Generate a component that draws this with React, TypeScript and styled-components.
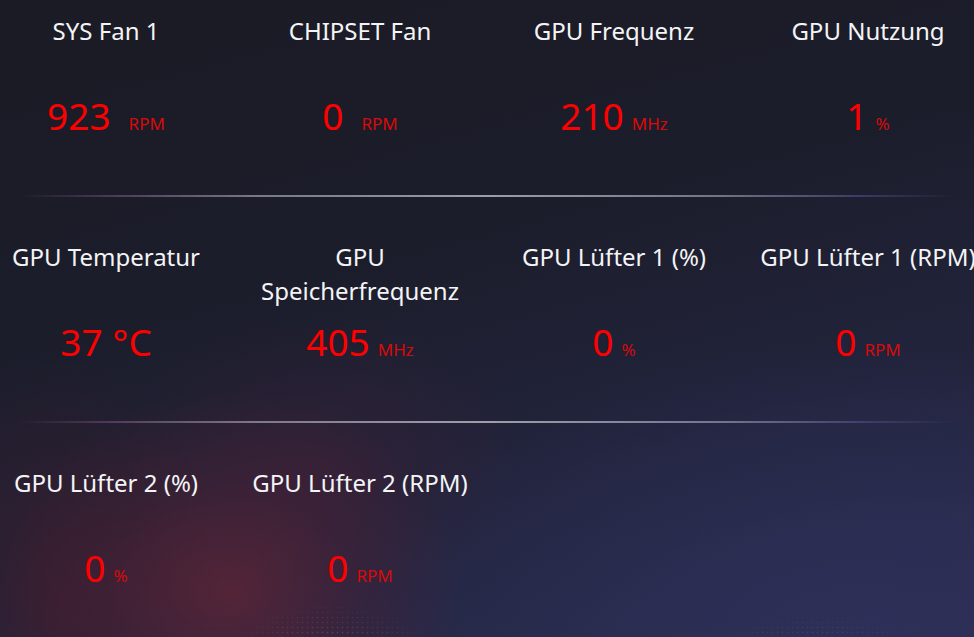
import styled, { createGlobalStyle } from 'styled-components';

const GlobalStyle = createGlobalStyle`
  html, body {
    margin: 0;
    padding: 0;
    overflow: hidden;
  }
  body {
    font-family: 'Noto Sans', 'Open Sans', sans-serif;
  }
`;

const Page = styled.div`
  position: relative;
  width: 974px;
  height: 637px;
  overflow: hidden;
  background:
    radial-gradient(ellipse 230px 200px at 230px 590px, rgba(105, 36, 52, 0.7), rgba(85, 32, 52, 0.35) 55%, transparent 100%),
    radial-gradient(ellipse 170px 240px at 60px 600px, rgba(70, 26, 38, 0.55), transparent 100%),
    radial-gradient(ellipse 200px 140px at 320px 460px, rgba(70, 32, 55, 0.4), transparent 100%),
    radial-gradient(ellipse 520px 300px at 860px 640px, rgba(46, 48, 90, 0.9), transparent 100%),
    linear-gradient(165deg, #1a1b24 0%, #1c1d2b 40%, #22243d 70%, #2a2c50 100%);

  &::before,
  &::after {
    content: '';
    position: absolute;
    pointer-events: none;
    background-image: radial-gradient(circle, rgba(180, 180, 195, 0.7) 0.6px, transparent 1.1px);
    background-size: 5px 5px;
  }
  &::before {
    left: 220px;
    top: 590px;
    width: 220px;
    height: 110px;
    -webkit-mask-image: radial-gradient(ellipse 50% 50% at 50% 60%, rgba(0, 0, 0, 0.55), transparent 100%);
    mask-image: radial-gradient(ellipse 50% 50% at 50% 60%, rgba(0, 0, 0, 0.55), transparent 100%);
  }
  &::after {
    left: 690px;
    top: 600px;
    width: 250px;
    height: 110px;
    -webkit-mask-image: radial-gradient(ellipse 50% 50% at 50% 60%, rgba(0, 0, 0, 0.5), transparent 100%);
    mask-image: radial-gradient(ellipse 50% 50% at 50% 60%, rgba(0, 0, 0, 0.5), transparent 100%);
  }
`;

const Section = styled.section`
  padding-top: 14px;
`;

const Grid = styled.div`
  display: grid;
  grid-template-columns: repeat(4, 230px);
  column-gap: 24px;
  margin: 0 -9px;
`;

const Tile = styled.div`
  display: flex;
  flex-direction: column;
  align-items: center;
  text-align: center;
`;

const Title = styled.div`
  color: #f4f4f6;
  font-size: 24px;
  line-height: 34px;
  min-height: 68px;
`;

const Value = styled.div`
  margin-top: 11px;
  display: flex;
  align-items: baseline;
  justify-content: center;
  height: 46px;
  color: #ff0000;
  font-size: 37px;
  line-height: 46px;
`;

const Unit = styled.span<{ $big?: boolean; $gap: number }>`
  margin-left: ${(p) => p.$gap}px;
  color: ${(p) => (p.$big ? '#ff0000' : '#d80a0a')};
  font-size: ${(p) => (p.$big ? '37px' : '17px')};
`;

const Divider = styled.div`
  height: 2px;
  margin: 56px 18px 29px;
  background: linear-gradient(
    90deg,
    transparent 0%,
    rgba(120, 80, 130, 0.55) 10%,
    rgba(150, 150, 165, 0.75) 25%,
    rgba(190, 190, 200, 0.8) 50%,
    rgba(150, 150, 170, 0.7) 75%,
    rgba(100, 90, 160, 0.45) 90%,
    transparent 100%
  );
`;

type Sensor = {
  title: string;
  value: string;
  unit: string;
  big?: boolean;
  gap?: number;
};

const rows: Sensor[][] = [
  [
    { title: 'SYS Fan 1', value: '923', unit: 'RPM', gap: 18 },
    { title: 'CHIPSET Fan', value: '0', unit: 'RPM', gap: 18 },
    { title: 'GPU Frequenz', value: '210', unit: 'MHz' },
    { title: 'GPU Nutzung', value: '1', unit: '%' },
  ],
  [
    { title: 'GPU Temperatur', value: '37', unit: '°C', big: true },
    { title: 'GPU Speicherfrequenz', value: '405', unit: 'MHz' },
    { title: 'GPU Lüfter 1 (%)', value: '0', unit: '%' },
    { title: 'GPU Lüfter 1 (RPM)', value: '0', unit: 'RPM' },
  ],
  [
    { title: 'GPU Lüfter 2 (%)', value: '0', unit: '%' },
    { title: 'GPU Lüfter 2 (RPM)', value: '0', unit: 'RPM' },
  ],
];

function App() {
  return (
    <Page>
      <GlobalStyle />
      {rows.map((row, i) => (
        <Section key={i}>
          <Grid>
            {row.map((s) => (
              <Tile key={s.title}>
                <Title>{s.title}</Title>
                <Value>
                  {s.value}
                  <Unit $big={s.big} $gap={s.big ? 10 : s.gap ?? 8}>
                    {s.unit}
                  </Unit>
                </Value>
              </Tile>
            ))}
          </Grid>
          {i < rows.length - 1 ? <Divider /> : null}
        </Section>
      ))}
    </Page>
  );
}

export default App;
